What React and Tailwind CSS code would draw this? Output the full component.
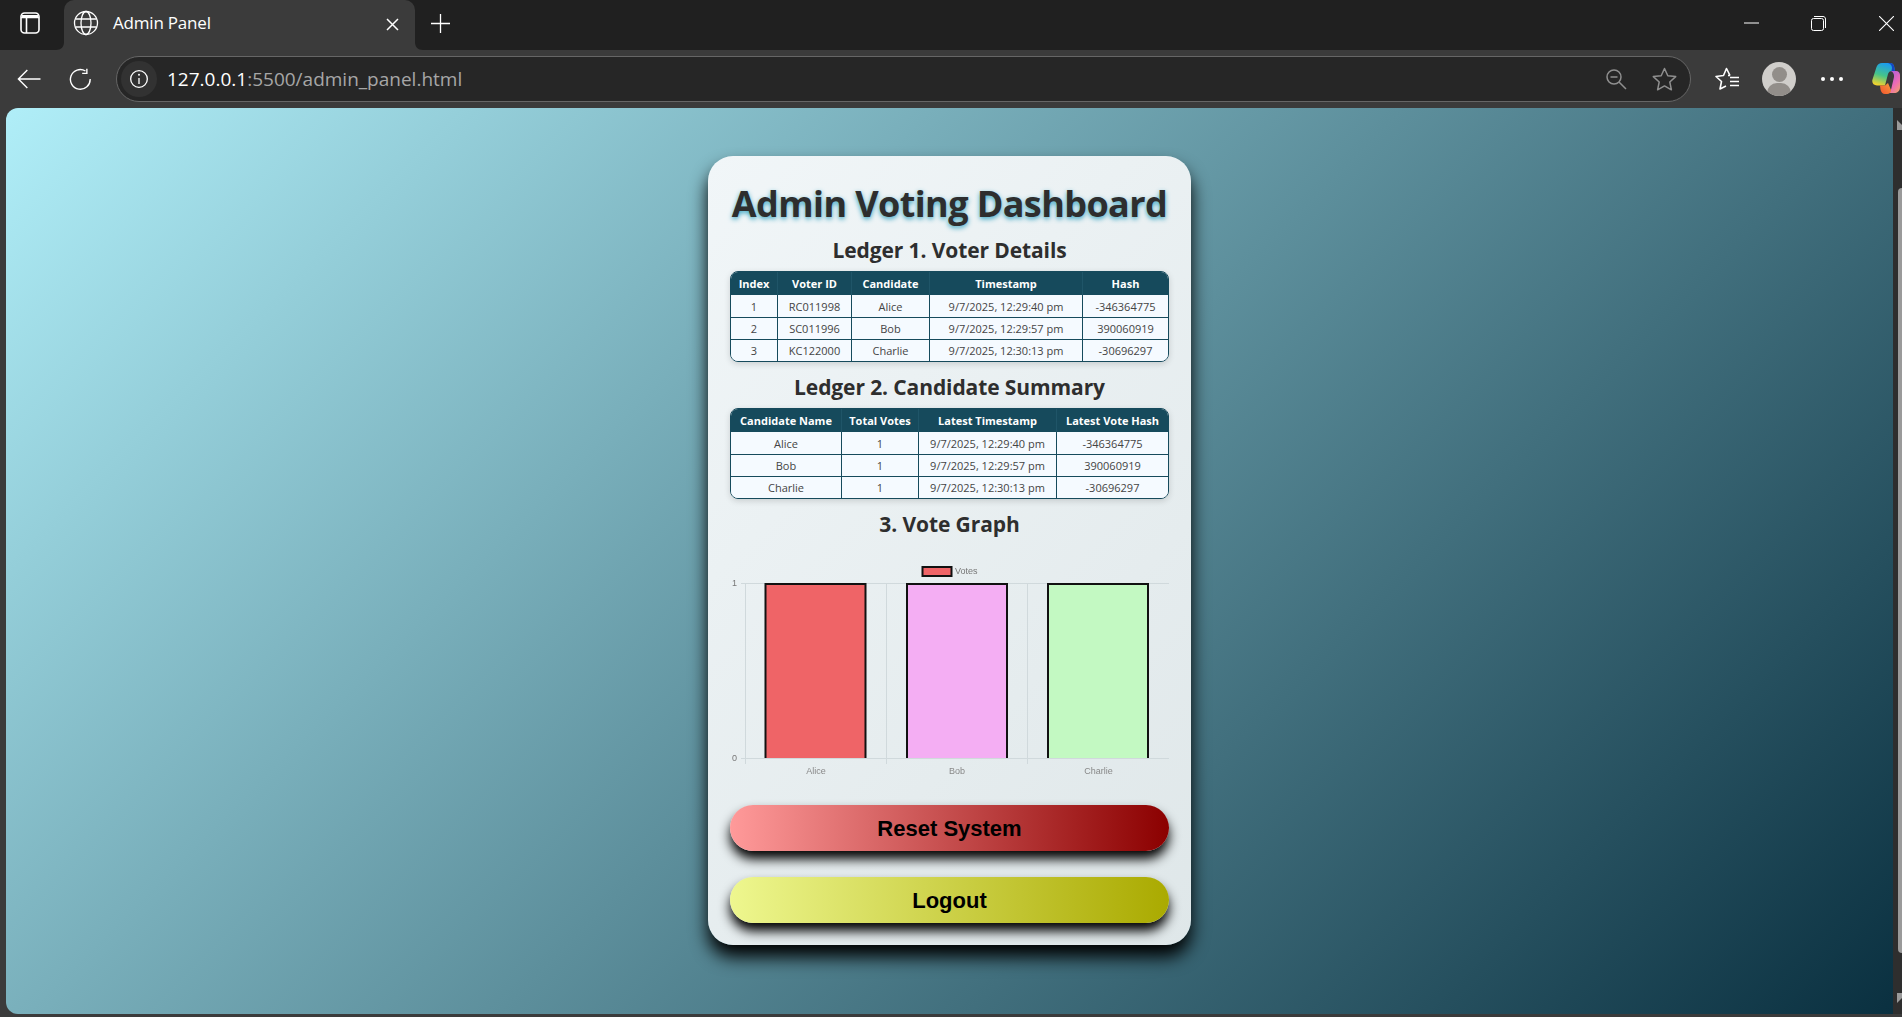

const ui = { fontFamily: '"Open Sans", "Noto Sans", sans-serif' };

function Cell({ children, w, head, last }) {
  return (
    <div
      style={{ width: w }}
      className={`flex items-center justify-center shrink-0 text-center ${head ? "text-white font-bold" : "text-[#444]"} ${last ? "" : head ? "border-r border-[#1f5568]" : "border-r-[1px] border-[#164a5c]"}`}
    >
      {children}
    </div>
  );
}

function Table({ cols, head, rows }) {
  return (
    <div className="w-[439px] rounded-[8px] overflow-hidden border border-[#164a5c] shadow-[0_2px_6px_rgba(0,0,0,0.15)] text-[11px] leading-none">
      <div className="flex h-[23px] bg-[#164a5c]">
        {head.map((h, i) => (
          <Cell key={h} w={cols[i]} head last={i === head.length - 1}>{h}</Cell>
        ))}
      </div>
      {rows.map((r, ri) => (
        <div key={ri} className={`flex bg-[#f5faff] ${ri === 0 ? "h-[22px]" : "h-[22px] border-t border-[#164a5c]"}`}>
          {r.map((c, i) => (
            <Cell key={i} w={cols[i]} last={i === r.length - 1}>{c}</Cell>
          ))}
        </div>
      ))}
    </div>
  );
}

function Chart() {
  const bars = [
    { x: 765.5, f: "#ef6467", l: "Alice", c: 816 },
    { x: 907, f: "#f4aef3", l: "Bob", c: 957 },
    { x: 1048, f: "#c3f9c2", l: "Charlie", c: 1098.5 },
  ];
  return (
    <svg width="439" height="218" viewBox="730 560 439 218" className="block blur-[0.3px]" style={{ fontFamily: '"Liberation Sans", sans-serif' }}>
      <g stroke="#d0d9dc" strokeWidth="1" fill="none">
        <path d="M741 583.5H1169M741 758.5H1169" />
        <path d="M745.5 583V764M886.5 583V764M1027.5 583V764" />
      </g>
      <rect x="922.5" y="567" width="29" height="9" fill="#ef6467" stroke="#111" strokeWidth="2" />
      <text x="955" y="574" fontSize="9" fill="#777">Votes</text>
      <text x="737" y="586" fontSize="9" fill="#777" textAnchor="end">1</text>
      <text x="737" y="761" fontSize="9" fill="#777" textAnchor="end">0</text>
      {bars.map((b) => (
        <g key={b.l}>
          <path d={`M${b.x} 758V584H${b.x + 100}V758`} fill={b.f} stroke="#111" strokeWidth="2" />
          <text x={b.c} y="774" fontSize="9" fill="#888" textAnchor="middle">{b.l}</text>
        </g>
      ))}
    </svg>
  );
}

function Copilot() {
  return (
    <svg width="30" height="32" viewBox="0 0 30 32">
      <defs>
        <linearGradient id="cpa" x1="0.3" y1="1" x2="0.6" y2="0">
          <stop offset="0" stopColor="#f5d32c" />
          <stop offset="0.45" stopColor="#46c48a" />
          <stop offset="1" stopColor="#1a9bf0" />
        </linearGradient>
        <linearGradient id="cpb" x1="0.2" y1="0" x2="0.9" y2="1">
          <stop offset="0" stopColor="#a85be0" />
          <stop offset="0.6" stopColor="#ec6cb5" />
          <stop offset="1" stopColor="#f2a06a" />
        </linearGradient>
        <linearGradient id="cpc" x1="0" y1="1" x2="1" y2="0">
          <stop offset="0" stopColor="#f2542d" />
          <stop offset="1" stopColor="#f79a3e" />
        </linearGradient>
      </defs>
      <path d="M10 0H18C20 0 21.5 1.2 22 3L23 8H19.5C17.5 8 16.5 9.5 16 11L13 22.5H5C1.5 22.5 -0.5 19.5 0.5 16.5L4.5 4C5.5 1.5 7.5 0 10 0Z" fill="url(#cpa)" />
      <path d="M16 0H18C20 0 21.5 1.2 22 3L23 8H19.5L20 5C20 2.5 18.5 0.5 16 0Z" fill="#1546c4" />
      <path d="M20 8H26C28.5 8 30 10 30 12V24C30 28 27.5 30 24 30H17C19 30 20.5 28.5 21.2 26L24 14C24.5 11 22.5 8 20 8Z" fill="url(#cpb)" transform="translate(-2 0)" />
      <path d="M8 22.5H13L16 20L19 27C19 29.5 17.5 31 15 31H13C10.5 31 9 29 8.5 26.5Z" fill="url(#cpc)" />
    </svg>
  );
}

function Flare({ right }) {
  return (
    <svg width="8" height="8" viewBox="0 0 8 8" className={`absolute bottom-0 ${right ? "right-[-8px]" : "left-[-8px]"}`}>
      <path d={right ? "M0 0C0 5 3 8 8 8H0Z" : "M8 0C8 5 5 8 0 8H8Z"} fill="#3b3b3b" />
    </svg>
  );
}

export default function App() {
  return (
    <div className="w-[1902px] h-[1017px] overflow-hidden flex flex-col bg-[#3b3b3b]" style={ui}>
      {/* tab strip */}
      <div className="h-[50px] shrink-0 bg-[#202020] flex items-center">
        <div className="w-[64px] h-full flex items-center justify-center pr-[4px] pb-[4px]">
          <svg width="20" height="22" viewBox="0 0 20 22" fill="none" stroke="#fff" strokeWidth="1.6">
            <rect x="1" y="1" width="18" height="20" rx="3.5" />
            <path d="M6.5 6V21M1 5.5H19" />
            <path d="M2 3H18V5.5H2Z" fill="#fff" stroke="none" />
          </svg>
        </div>
        <div className="relative w-[351px] h-full bg-[#3b3b3b] rounded-t-[10px] flex items-center pl-[9px] pb-[4px] text-white text-[17px]">
          <Flare />
          <Flare right />
          <svg width="26" height="26" viewBox="0 0 26 26" fill="none" stroke="#fff" strokeWidth="1.3">
            <circle cx="13" cy="13" r="11.5" />
            <ellipse cx="13" cy="13" rx="5" ry="11.5" />
            <path d="M2.5 9H23.5M2.5 17H23.5" />
          </svg>
          <span className="ml-[14px] tracking-[-0.2px]">Admin Panel</span>
          <svg width="13" height="13" viewBox="0 0 13 13" stroke="#fff" strokeWidth="1.5" className="ml-auto mr-[16px] mt-[3px]">
            <path d="M1 1L12 12M12 1L1 12" />
          </svg>
        </div>
        <svg width="19" height="19" viewBox="0 0 19 19" stroke="#fff" strokeWidth="1.3" className="ml-[16px] mb-[4px]">
          <path d="M9.5 0V19M0 9.5H19" />
        </svg>
        <div className="ml-auto flex items-center pr-[8px] pb-[3px]">
          <svg width="15" height="2" viewBox="0 0 15 2" stroke="#fff" className="mr-[52px] mb-[1px]">
            <path d="M0 1H15" strokeWidth="1" />
          </svg>
          <svg width="15" height="15" viewBox="0 0 15 15" fill="none" stroke="#fff" strokeWidth="1" className="mr-[53px]">
            <rect x="0.5" y="2.5" width="12" height="12" rx="2" />
            <path d="M3 0.5H12C13.5 0.5 14.5 1.5 14.5 3V12" />
          </svg>
          <svg width="15" height="15" viewBox="0 0 15 15" stroke="#fff" strokeWidth="1.1">
            <path d="M0 0L15 15M15 0L0 15" />
          </svg>
        </div>
      </div>
      {/* toolbar */}
      <div className="h-[58px] shrink-0 flex items-center text-white">
        <svg width="26" height="22" viewBox="0 0 26 22" fill="none" stroke="#fff" strokeWidth="1.5" className="ml-[17px]">
          <path d="M25 11H2M11 1.5L1.5 11L11 20.5" />
        </svg>
        <svg width="24" height="24" viewBox="0 0 24 24" fill="none" stroke="#fff" strokeWidth="1.5" className="ml-[28px]">
          <path d="M17.5 3.5A10.5 10.5 0 1 0 22.5 12" />
          <path d="M19 1V6H14" />
        </svg>
        <div className="ml-[24px] w-[1575px] h-[46px] shrink-0 rounded-full border border-[#666] bg-[#262626] flex items-center pl-[4px] pr-[10px]">
          <div className="w-[36px] h-[36px] rounded-full flex items-center justify-center bg-[#323232]">
            <svg width="20" height="20" viewBox="0 0 18 18" fill="none" stroke="#fff" strokeWidth="1.2">
              <circle cx="9" cy="9" r="7.5" />
              <path d="M9 8V13.5" />
              <circle cx="9" cy="5.2" r="0.9" fill="#fff" stroke="none" />
            </svg>
          </div>
          <span className="ml-[10px] text-[19px]">
            127.0.0.1<span className="text-[#a6a6a6]">:5500/admin_panel.html</span>
          </span>
          <svg width="22" height="22" viewBox="0 0 22 22" fill="none" stroke="#8f8f8f" strokeWidth="1.5" className="ml-auto mr-[25px]">
            <circle cx="9" cy="9" r="7" />
            <path d="M5.5 9H12.5M14 14L21 21" />
          </svg>
          <svg width="25" height="24" viewBox="0 0 25 24" fill="none" stroke="#8f8f8f" strokeWidth="1.5" className="mr-[3px]">
            <path d="M12.5 1.5L15.8 8.7L23.7 9.6L17.8 15L19.4 22.8L12.5 18.9L5.6 22.8L7.2 15L1.3 9.6L9.2 8.7Z" strokeLinejoin="round" />
          </svg>
        </div>
        <svg width="25" height="24" viewBox="0 0 25 24" fill="none" stroke="#fff" strokeWidth="1.6" className="ml-[24px] shrink-0">
          <path d="M15 8.5L11.5 1.5L8.5 8.5L1 9.5L6.5 14.5L5 22L11 19M13 8.5H15" strokeLinejoin="round" />
          <path d="M15 10.5H24M15 14.5H24M15 18.5H24" />
        </svg>
        <div className="ml-[22px] w-[34px] h-[34px] rounded-full bg-[#d0cecb] relative overflow-hidden shrink-0">
          <div className="absolute left-[9.5px] top-[5px] w-[15px] h-[15px] rounded-full bg-[#928e8a]" />
          <div className="absolute left-[5px] top-[21px] w-[24px] h-[20px] rounded-full bg-[#928e8a]" />
        </div>
        <div className="ml-[25px] flex gap-[5px] shrink-0">
          <div className="w-[4px] h-[4px] rounded-full bg-white" />
          <div className="w-[4px] h-[4px] rounded-full bg-white" />
          <div className="w-[4px] h-[4px] rounded-full bg-white" />
        </div>
        <div className="ml-[29px] shrink-0 w-[30px]"><Copilot /></div>
      </div>
      {/* page */}
      <div className="flex-1 flex min-h-0 pl-[6px] pb-[3px]">
        <div className="w-[1887px] rounded-l-[12px] bg-[linear-gradient(135deg,#b0eef8,#0a3040)] flex justify-center pt-[48px] overflow-hidden">
          <div className="w-[483px] h-[789px] rounded-[25px] bg-[linear-gradient(135deg,#f1f6f8,#dfe7e9)] shadow-[0_12px_18px_#000] px-[22px] flex flex-col items-center">
            <h1 className="mt-[23px] text-[36px] leading-[49px] font-bold text-[#2e2e2e] whitespace-nowrap tracking-[-0.6px] [text-shadow:0_2px_5px_#3aa6c4]">Admin Voting Dashboard</h1>
            <h2 className="mt-[7px] text-[21px] leading-[30px] font-bold text-[#2e2e2e] tracking-[-0.1px]">Ledger 1. Voter Details</h2>
            <div className="mt-[6px]">
              <Table
                cols={[47, 74, 78, 153, 85]}
                head={["Index", "Voter ID", "Candidate", "Timestamp", "Hash"]}
                rows={[
                  ["1", "RC011998", "Alice", "9/7/2025, 12:29:40 pm", "-346364775"],
                  ["2", "SC011996", "Bob", "9/7/2025, 12:29:57 pm", "390060919"],
                  ["3", "KC122000", "Charlie", "9/7/2025, 12:30:13 pm", "-30696297"],
                ]}
              />
            </div>
            <h2 className="mt-[10px] text-[21px] leading-[30px] font-bold text-[#2e2e2e] tracking-[-0.1px]">Ledger 2. Candidate Summary</h2>
            <div className="mt-[6px]">
              <Table
                cols={[111, 77, 138, 111]}
                head={["Candidate Name", "Total Votes", "Latest Timestamp", "Latest Vote Hash"]}
                rows={[
                  ["Alice", "1", "9/7/2025, 12:29:40 pm", "-346364775"],
                  ["Bob", "1", "9/7/2025, 12:29:57 pm", "390060919"],
                  ["Charlie", "1", "9/7/2025, 12:30:13 pm", "-30696297"],
                ]}
              />
            </div>
            <h2 className="mt-[10px] text-[21px] leading-[30px] font-bold text-[#2e2e2e] tracking-[-0.1px]">3. Vote Graph</h2>
            <div className="mt-[21px]"><Chart /></div>
            <button className="mt-[27px] w-[439px] h-[46px] shrink-0 rounded-[23px] bg-[linear-gradient(90deg,#ff9a9a,#8b0000)] shadow-[0_8px_12px_#000] text-black font-bold text-[22px]" style={{ fontFamily: '"Liberation Sans", sans-serif' }}>Reset System</button>
            <button className="mt-[26px] w-[439px] h-[46px] shrink-0 rounded-[23px] bg-[linear-gradient(90deg,#eef78f,#aaaa00)] shadow-[0_8px_12px_#000] text-black font-bold text-[22px]" style={{ fontFamily: '"Liberation Sans", sans-serif' }}>Logout</button>
          </div>
        </div>
        <div className="w-[9px] flex flex-col bg-[#2e2e2e] overflow-hidden">
          <div className="mt-[12px] ml-[4px] w-0 h-0 shrink-0 border-r-[10px] border-b-[10px] border-r-transparent border-b-[#9a9a9a]" />
          <div className="mt-[58px] ml-[5px] w-[8px] h-[765px] shrink-0 rounded-[4px] bg-[#9a9a9a]" />
          <div className="mt-[40px] ml-[4px] w-0 h-0 shrink-0 border-r-[10px] border-t-[10px] border-r-transparent border-t-[#9a9a9a]" />
        </div>
      </div>
    </div>
  );
}
